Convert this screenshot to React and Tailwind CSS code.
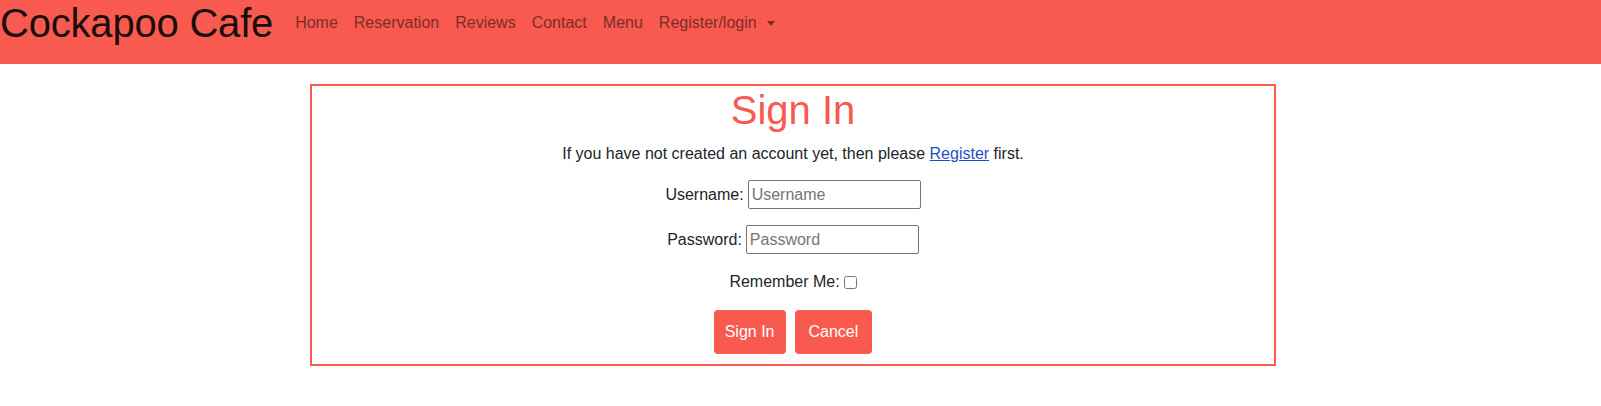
import React from 'react';

const navLinks = ['Home', 'Reservation', 'Reviews', 'Contact', 'Menu'];

const App = () => {
  return (
    <div className="min-h-[406px] bg-white font-['Liberation_Sans','Inter',sans-serif] text-[#212529]">
      <nav className="h-[64px] bg-[#f95a4f] flex items-start">
        <a href="#" className="text-[40px] leading-[46px] text-[#1a0d0c] mr-[14px] tracking-[-0.2px]">Cockapoo Cafe</a>
        <ul className="flex items-center h-[46px]">
          {navLinks.map((l) => (
            <li key={l}>
              <a href="#" className="px-[8px] text-[16px] text-[#7c2d28]">{l}</a>
            </li>
          ))}
          <li>
            <a href="#" className="px-[8px] text-[16px] text-[#7c2d28] flex items-center">
              Register/login
              <span className="ml-[10px] inline-block w-0 h-0 border-l-[4px] border-r-[4px] border-t-[5px] border-l-transparent border-r-transparent border-t-[#7c2d28]"></span>
            </a>
          </li>
        </ul>
      </nav>

      <div className="ml-[310px] mt-[20px] w-[966px] border-2 border-[#f95a4f] flex flex-col items-center pb-[10px]">
        <h1 className="text-[40px] leading-[48px] text-[#f95a4f]">Sign In</h1>
        <p className="mt-[8px] text-[16px] leading-[24px]">
          If you have not created an account yet, then please{' '}
          <a href="#" className="text-[#1f4fc4] underline">Register</a> first.
        </p>
        <form className="flex flex-col items-center">
          <div className="mt-[14px] flex items-center">
            <label className="text-[16px] mr-[4px]">Username:</label>
            <input type="text" placeholder="Username" className="w-[173px] h-[29px] border border-[#767676] rounded-[2px] px-[3px] text-[16px] placeholder:text-[#757575] outline-none" />
          </div>
          <div className="mt-[16px] flex items-center">
            <label className="text-[16px] mr-[4px]">Password:</label>
            <input type="password" placeholder="Password" className="w-[173px] h-[29px] border border-[#767676] rounded-[2px] px-[3px] text-[16px] placeholder:text-[#757575] outline-none" />
          </div>
          <div className="mt-[16px] flex items-center h-[24px]">
            <label className="text-[16px] mr-[4px]">Remember Me:</label>
            <input type="checkbox" className="w-[13px] h-[13px]" />
          </div>
          <div className="mt-[16px] flex gap-[9px]">
            <button type="button" className="h-[44px] px-[11px] bg-[#f95a4f] text-white text-[16px] rounded-[4px]">Sign In</button>
            <button type="button" className="h-[44px] px-[14px] bg-[#f95a4f] text-white text-[16px] rounded-[4px]">Cancel</button>
          </div>
        </form>
      </div>
    </div>
  );
};

export default App;
